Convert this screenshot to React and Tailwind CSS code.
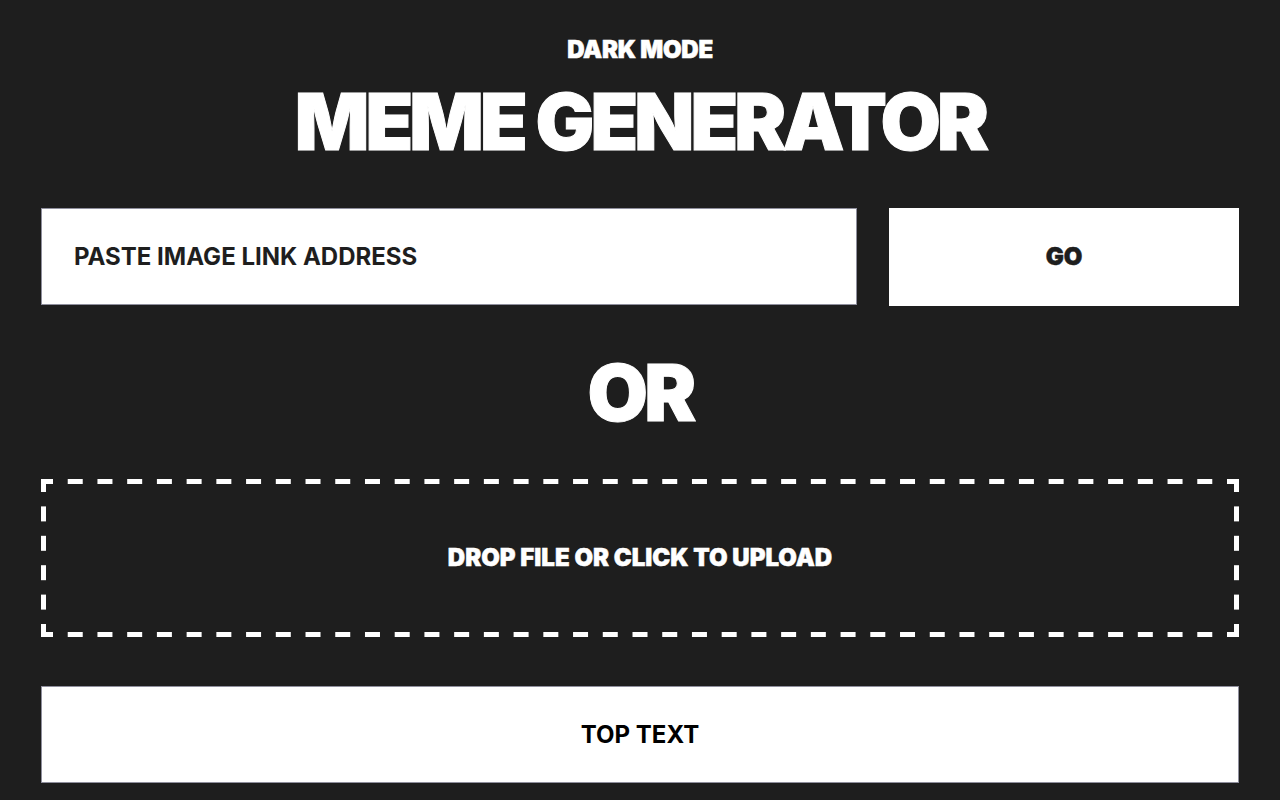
import React from "react";

// dashes like the browser's 5px dashed border: short dash at each corner, 15px dashes between
function dashes(len, corner = 12, dash = 15) {
  const n = Math.max(0, Math.round((len - 2 * corner - dash) / (2 * dash)));
  const gap = (len - 2 * corner - n * dash) / (n + 1);
  const out = [[0, corner]];
  let p = corner + gap;
  for (let i = 0; i < n; i++) {
    out.push([p, dash]);
    p += dash + gap;
  }
  out.push([len - corner, corner]);
  return out;
}

function DashedFrame({ w, h, t = 5 }) {
  const hz = dashes(w);
  const vt = dashes(h, 13);
  return (
    <svg className="pointer-events-none absolute inset-0" width={w} height={h}>
      {hz.map(([x, l], i) => (
        <g key={"h" + i}>
          <rect x={x} y={0} width={l} height={t} fill="#fff" />
          <rect x={x} y={h - t} width={l} height={t} fill="#fff" />
        </g>
      ))}
      {vt.map(([y, l], i) => (
        <g key={"v" + i}>
          <rect x={0} y={y} width={t} height={l} fill="#fff" />
          <rect x={w - t} y={y} width={t} height={l} fill="#fff" />
        </g>
      ))}
    </svg>
  );
}

export default function App() {
  return (
    <div className="min-h-screen bg-[#1e1e1e] px-[41px] pt-[34px] font-['Inter',sans-serif]">
      <div className="text-center text-white font-black text-[24px] leading-[32px] tracking-[-0.01em] [-webkit-text-stroke:0.6px_white]">
        DARK MODE
      </div>
      <h1 className="mt-[8px] text-center text-white font-black text-[78px] leading-[96px] tracking-[-0.05em] [-webkit-text-stroke:1px_white]">
        MEME GENERATOR
      </h1>

      <div className="mt-[38px] flex gap-8">
        <input
          type="text"
          placeholder="PASTE IMAGE LINK ADDRESS"
          className="h-[97px] flex-1 border border-[#8f8f9d] bg-white px-8 text-[24px] font-bold text-[#1e1e1e] placeholder:text-[#1e1e1e] outline-none"
        />
        <button className="h-[98px] w-[350px] bg-white text-[24px] font-black text-[#1e1e1e] [-webkit-text-stroke:0.5px_#1e1e1e]">
          GO
        </button>
      </div>

      <div className="mt-[39px] text-center text-white font-black text-[78px] leading-[96px] tracking-[-0.05em] [-webkit-text-stroke:1px_white]">
        OR
      </div>

      <label className="relative mt-[38px] flex h-[158px] cursor-pointer items-center justify-center">
        <DashedFrame w={1198} h={158} />
        <span className="text-[24px] font-black text-white [-webkit-text-stroke:0.5px_white]">
          DROP FILE OR CLICK TO UPLOAD
        </span>
        <input type="file" className="hidden" />
      </label>

      <input
        type="text"
        placeholder="TOP TEXT"
        className="mt-[49px] h-[97px] w-full border border-[#8f8f9d] bg-white px-8 text-center text-[24px] font-bold text-black placeholder:text-black outline-none"
      />
    </div>
  );
}
